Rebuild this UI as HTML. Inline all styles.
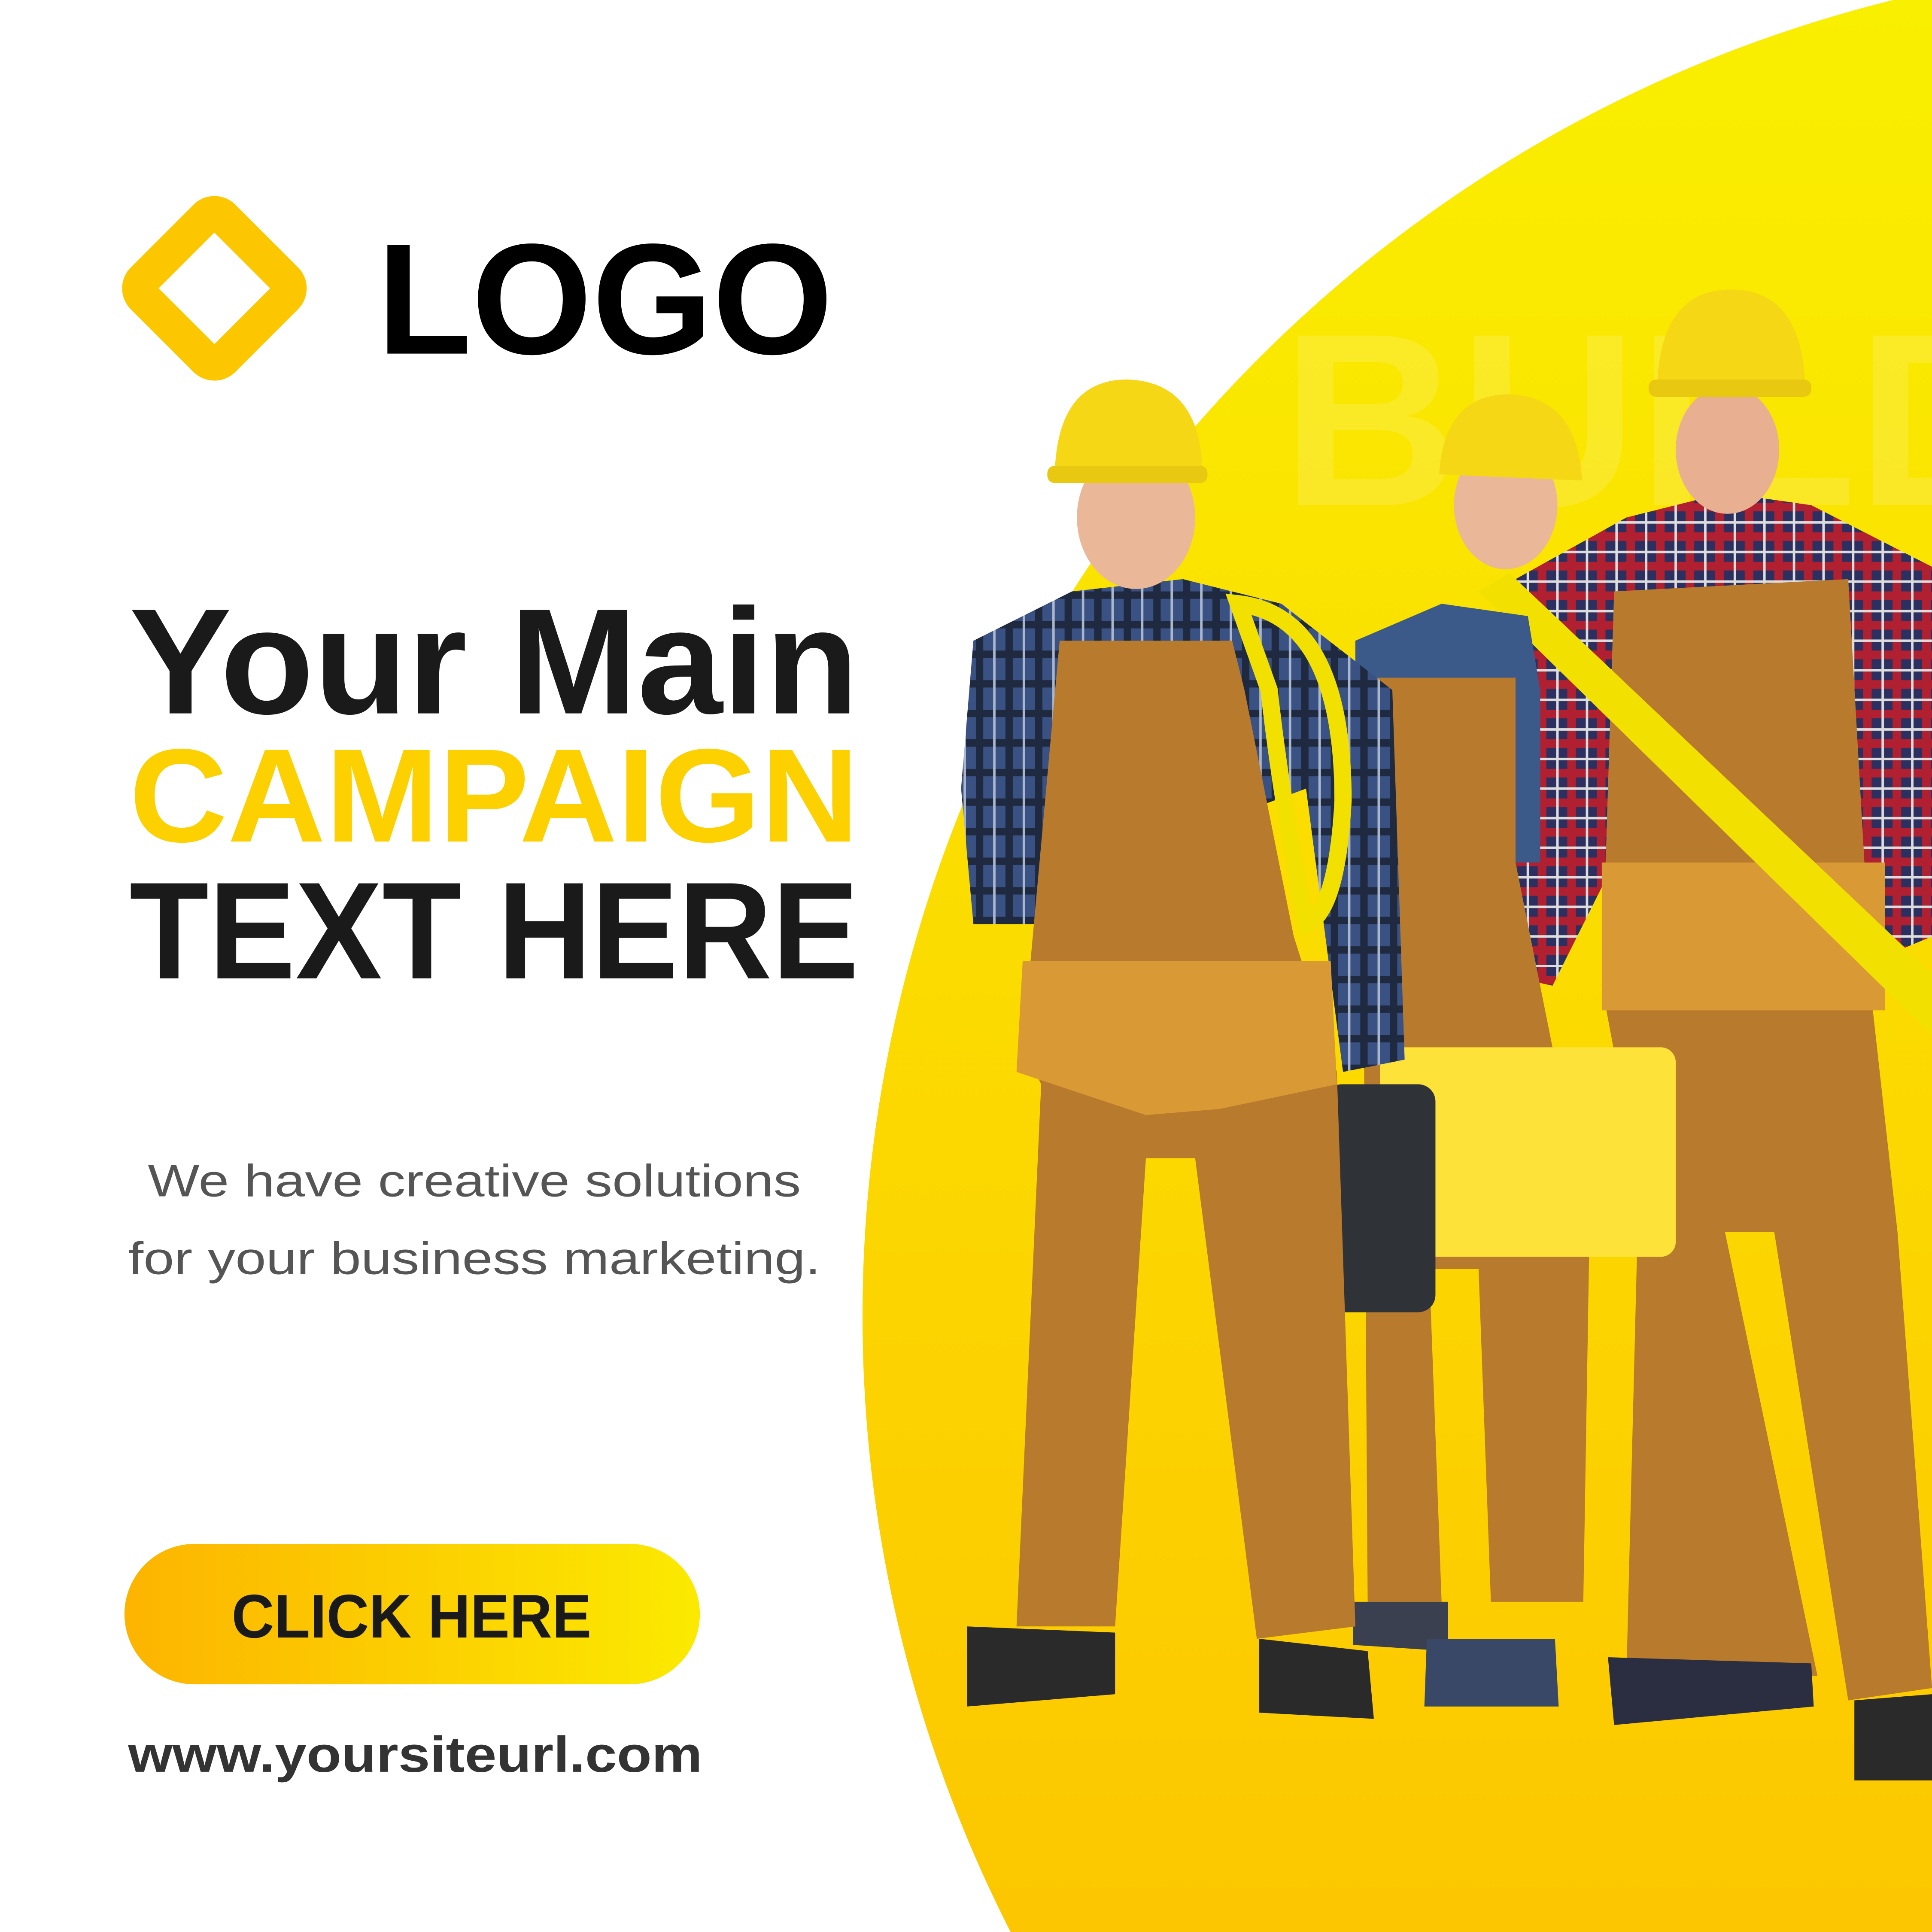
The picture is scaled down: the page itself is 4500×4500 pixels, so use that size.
<!DOCTYPE html>
<html><head><meta charset="utf-8"><style>html,body{margin:0;padding:0;background:#fff;width:4500px;height:4500px;overflow:hidden;position:relative}svg{display:block;position:absolute;left:0;top:0}</style></head>
<body>
<svg width="4500" height="4500" viewBox="0 0 1568 1568" xmlns="http://www.w3.org/2000/svg">
<defs>
<linearGradient id="bg" x1="0" y1="0" x2="0" y2="1"><stop offset="0" stop-color="#f9f000"/><stop offset="0.5" stop-color="#fcd400"/><stop offset="1" stop-color="#fbb600"/></linearGradient>
<linearGradient id="btn" x1="0" y1="0" x2="1" y2="0"><stop offset="0" stop-color="#fdb400"/><stop offset="1" stop-color="#fbea00"/></linearGradient>
<pattern id="plaidB" width="24" height="24" patternUnits="userSpaceOnUse"><rect width="24" height="24" fill="#3a5283"/><rect width="24" height="6" fill="#1f2a40"/><rect width="6" height="24" fill="#1f2a40"/><rect x="14" width="2" height="24" fill="#aab6cc"/></pattern>
<pattern id="plaidR" width="24" height="24" patternUnits="userSpaceOnUse"><rect width="24" height="24" fill="#2c3060"/><rect width="24" height="7" fill="#b02030"/><rect width="7" height="24" fill="#b02030"/><rect x="15" width="2" height="24" fill="#ddd"/><rect y="15" width="24" height="2" fill="#ddd"/></pattern>
</defs>
<rect width="1568" height="1568" fill="#fff"/>
<circle cx="1800" cy="1068" r="1100" fill="url(#bg)"/>
<text x="1040" y="410" font-family="Liberation Sans" font-weight="bold" font-size="200" fill="#fff" opacity="0.15">BUILD</text>

<rect x="128" y="188" width="92" height="92" rx="10" transform="rotate(45 174 234)" fill="none" stroke="#fdc700" stroke-width="28"/>
<text x="306" y="287" font-family="Liberation Sans" font-weight="bold" font-size="128" fill="#000" textLength="370" lengthAdjust="spacingAndGlyphs">LOGO</text>

<text x="105" y="579" font-family="Liberation Sans" font-weight="bold" font-size="122" fill="#1a1a1a" textLength="592" lengthAdjust="spacingAndGlyphs">Your Main</text>
<text x="105" y="683" font-family="Liberation Sans" font-weight="bold" font-size="108" fill="#fdd000" textLength="592" lengthAdjust="spacingAndGlyphs">CAMPAIGN</text>
<text x="105" y="794" font-family="Liberation Sans" font-weight="bold" font-size="112" fill="#1a1a1a" textLength="592" lengthAdjust="spacingAndGlyphs">TEXT HERE</text>

<text x="120" y="971" font-family="Liberation Sans" font-size="37" fill="#555" textLength="530" lengthAdjust="spacingAndGlyphs">We have creative solutions</text>
<text x="104" y="1034" font-family="Liberation Sans" font-size="37" fill="#555" textLength="562" lengthAdjust="spacingAndGlyphs">for your business marketing.</text>

<rect x="101" y="1253" width="467" height="114" rx="57" fill="url(#btn)"/>
<text x="188" y="1329" font-family="Liberation Sans" font-weight="bold" font-size="50" fill="#1a1a1a" textLength="292" lengthAdjust="spacingAndGlyphs">CLICK HERE</text>
<text x="104" y="1438" font-family="Liberation Sans" font-weight="bold" font-size="41" fill="#333" textLength="466" lengthAdjust="spacingAndGlyphs">www.yoursiteurl.com</text>

<path d="M1230 470 L1320 420 L1400 400 L1470 410 L1568 460 L1568 760 L1520 780 L1500 720 L1300 720 L1260 800 L1215 790 Z" fill="url(#plaidR)"/>
<path d="M1310 480 L1500 470 L1520 820 L1540 1000 L1568 1370 L1500 1380 L1440 1000 L1400 1000 L1475 1360 L1320 1360 L1330 960 L1300 800 Z" fill="#b87a2c"/>
<rect x="1300" y="700" width="230" height="120" fill="#d99a35"/>
<path d="M1305 1345 L1470 1350 L1472 1385 L1310 1400 Z" fill="#2a2e40"/>
<path d="M1505 1380 L1568 1375 L1568 1445 L1505 1445 Z" fill="#2a2a2a"/>
<ellipse cx="1402" cy="365" rx="42" ry="52" fill="#e8b090"/>
<path d="M1345 312 Q1348 235 1405 235 Q1462 235 1465 312 Z" fill="#f5d716"/>
<rect x="1338" y="308" width="132" height="14" rx="6" fill="#e8c810"/>
<polygon points="1200,480 1225,465 1568,790 1568,840" fill="#f2e000"/>
<path d="M1100 520 L1170 490 L1240 500 L1250 560 L1250 700 L1100 700 Z" fill="#3b5a8a"/>
<path d="M1105 550 L1230 550 L1230 700 L1290 1000 L1285 1300 L1210 1300 L1200 1030 L1160 1030 L1170 1300 L1110 1300 Z" fill="#b87a2c"/>
<path d="M1098 1300 L1175 1300 L1175 1340 L1098 1335 Z" fill="#3a4050"/>
<path d="M1158 1330 L1262 1330 L1265 1385 L1156 1385 Z" fill="#3a4868"/>
<ellipse cx="1222" cy="410" rx="42" ry="52" fill="#eab898"/>
<path d="M1168 385 Q1172 320 1225 320 Q1280 322 1284 390 Z" fill="#f5d716"/>
<rect x="1120" y="850" width="240" height="170" rx="12" fill="#fde23a"/>
<rect x="1075" y="880" width="90" height="185" rx="14" fill="#2f3236"/>
<path d="M790 520 L870 480 L960 470 L1040 490 L1130 560 L1140 860 L1090 870 L1060 640 L900 700 L860 750 L790 750 L780 640 Z" fill="url(#plaidB)"/>
<path d="M860 520 L1000 520 L1010 560 L1050 760 L1085 870 L1100 1320 L1020 1330 L970 940 L930 940 L905 1320 L825 1320 L845 880 L830 850 Z" fill="#b87a2c"/>
<path d="M830 780 L1080 780 L1085 880 L990 900 L930 905 L825 870 Z" fill="#d99a35"/>
<path d="M1005 490 Q1090 500 1090 650 Q1085 740 1060 750 Q1040 650 1030 560 Z" fill="none" stroke="#f2e000" stroke-width="14"/>
<path d="M785 1320 L905 1325 L905 1375 L785 1385 Z" fill="#2a2a2a"/>
<path d="M1022 1330 L1110 1340 L1115 1395 L1022 1390 Z" fill="#2a2a2a"/>
<ellipse cx="922" cy="420" rx="48" ry="58" fill="#eab898"/>
<path d="M856 385 Q858 308 915 308 Q975 310 976 385 Z" fill="#f5d716"/>
<rect x="850" y="378" width="130" height="14" rx="6" fill="#e8c810"/>
</svg>
</body></html>
